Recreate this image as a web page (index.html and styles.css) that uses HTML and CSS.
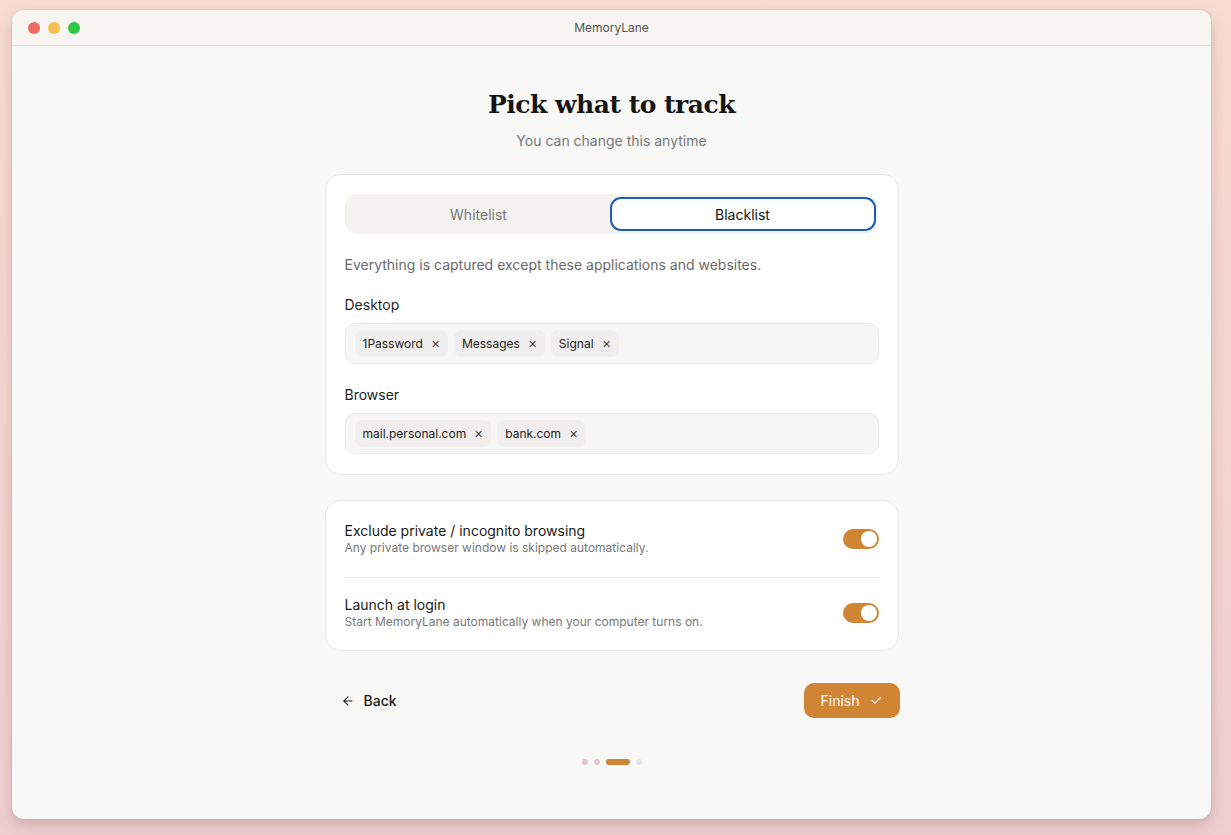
FILE: index.html
```html
<!DOCTYPE html>
<html lang="en">
<head>
  <meta charset="UTF-8" />
  <title>MemoryLane – Pick what to track</title>
  <link rel="stylesheet" href="styles.css">
</head>
<body>
<div class="window">
  <!-- ===== Title bar ===== -->
  <div class="titlebar">
    <div class="lights">
      <span class="light red"></span>
      <span class="light yellow"></span>
      <span class="light green"></span>
    </div>
    <div class="app-title">MemoryLane</div>
  </div>

  <!-- ===== Content ===== -->
  <main class="content">
    <h1>Pick what to track</h1>
    <p class="subtitle">You can change this anytime</p>

    <section class="card">
      <div class="segment">
        <button class="seg-btn">Whitelist</button>
        <button class="seg-btn active">Blacklist</button>
      </div>
      <p class="hint">Everything is captured except these applications and websites.</p>

      <div class="field-label">Desktop</div>
      <div class="tag-input">
        <span class="chip">1Password <span class="x">✕</span></span>
        <span class="chip">Messages <span class="x">✕</span></span>
        <span class="chip">Signal <span class="x">✕</span></span>
      </div>

      <div class="field-label">Browser</div>
      <div class="tag-input">
        <span class="chip">mail.personal.com <span class="x">✕</span></span>
        <span class="chip">bank.com <span class="x">✕</span></span>
      </div>
    </section>

    <section class="card settings">
      <div class="setting-row">
        <div class="setting-text">
          <div class="setting-title">Exclude private / incognito browsing</div>
          <div class="setting-sub">Any private browser window is skipped automatically.</div>
        </div>
        <span class="toggle on"></span>
      </div>
      <div class="setting-row">
        <div class="setting-text">
          <div class="setting-title">Launch at login</div>
          <div class="setting-sub">Start MemoryLane automatically when your computer turns on.</div>
        </div>
        <span class="toggle on"></span>
      </div>
    </section>

    <div class="footer-nav">
      <button class="btn-back">
        <svg width="14" height="14" viewBox="0 0 24 24" fill="none" stroke="currentColor" stroke-width="2" stroke-linecap="round" stroke-linejoin="round"><path d="M19 12H5"/><path d="M12 19l-7-7 7-7"/></svg>
        Back
      </button>
      <button class="btn-finish">
        Finish
        <svg width="13" height="13" viewBox="0 0 24 24" fill="none" stroke="currentColor" stroke-width="2" stroke-linecap="round" stroke-linejoin="round"><path d="M20 6L9 17l-5-5"/></svg>
      </button>
    </div>

    <div class="steps">
      <span class="dot done"></span>
      <span class="dot done"></span>
      <span class="dot current"></span>
      <span class="dot"></span>
    </div>
  </main>
</div>
</body>
</html>
```

FILE: styles.css
```css
:root {
  --accent: #cf8534;
  --text: #1c1c1c;
  --muted: #777777;
  --line: #e8e7e4;
  --win-bg: #f8f8f7;
  --focus: #1a5fb4;
}

/* ===== Reset ===== */
*, *::before, *::after { box-sizing: border-box; }
html, body { height: 100%; }
body {
  margin: 0;
  padding: 10px 20px 16px 12px;
  font-family: Inter, "Noto Sans", Arial, sans-serif;
  color: var(--text);
  background: linear-gradient(180deg, #f8dccf 0%, #f3d5d1 50%, #eecfd0 100%);
}
button {
  font-family: inherit;
  cursor: pointer;
  border: none;
  background: none;
}

/* ===== Window ===== */
.window {
  width: 1199px;
  height: 809px;
  background: var(--win-bg);
  border-radius: 12px;
  overflow: hidden;
  box-shadow: 0 6px 14px rgba(110, 70, 80, .25), 0 0 0 1px rgba(0,0,0,.04);
  display: flex;
  flex-direction: column;
}
.titlebar {
  height: 36px;
  flex: none;
  background: #f6f5f1;
  border-bottom: 1px solid #e4e2de;
  display: flex;
  align-items: center;
  position: relative;
}
.lights { display: flex; gap: 8px; padding-left: 16px; }
.light { width: 12px; height: 12px; border-radius: 50%; }
.light.red { background: #ee6b60; }
.light.yellow { background: #f6be4f; }
.light.green { background: #2ec840; }
.app-title {
  position: absolute;
  left: 0; right: 0;
  text-align: center;
  font-size: 12px;
  color: #555;
  pointer-events: none;
}

/* ===== Content ===== */
.content {
  display: flex;
  flex-direction: column;
  align-items: center;
  padding-top: 41px;
}
h1 {
  margin: 0;
  font-family: "DejaVu Serif", "Liberation Serif", serif;
  font-weight: bold;
  font-size: 25px;
  line-height: 36px;
  letter-spacing: -0.5px;
  color: #151515;
}
.subtitle {
  margin: 8px 0 0;
  font-size: 14px;
  line-height: 20px;
  color: var(--muted);
}

.card {
  width: 574px;
  background: #fff;
  border: 1px solid var(--line);
  border-radius: 16px;
  padding: 19px 19px 20px;
  margin-top: 23px;
}

/* Segmented control */
.segment {
  display: flex;
  background: #f5f3ef;
  border-radius: 12px;
  padding: 3px 1px 3px 3px;
  height: 40px;
  margin-right: 2px;
}
.seg-btn {
  flex: 1;
  font-size: 14px;
  color: #777;
  border-radius: 11px;
}
.seg-btn.active {
  background: #fff;
  color: #111;
  border: 2px solid var(--focus);
}
.hint {
  margin: 21px 0 0;
  font-size: 14px;
  line-height: 20px;
  color: #6a6a6a;
}
.field-label {
  margin-top: 20px;
  font-size: 14px;
  line-height: 20px;
  color: #1f1f1f;
}
.tag-input + .field-label { margin-top: 21px; }
.tag-input {
  margin-top: 8px;
  height: 41px;
  background: #f6f6f5;
  border: 1px solid #ebebea;
  border-radius: 10px;
  display: flex;
  align-items: center;
  gap: 6px;
  padding: 0 9px;
}
.chip {
  display: inline-flex;
  align-items: center;
  gap: 8px;
  height: 27px;
  padding: 0 8px;
  background: #f0efed;
  border-radius: 8px;
  font-size: 12px;
  color: #222;
}
.chip .x { font-size: 11px; color: #444; }

/* Settings card */
.settings { padding: 21px 19px 20px; margin-top: 25px; }
.setting-row {
  display: flex;
  align-items: center;
  justify-content: space-between;
}
.setting-row:first-child { padding-bottom: 21px; }
.setting-row + .setting-row {
  border-top: 1px solid #e9e9e7;
  padding-top: 18px;
}
.setting-title { font-size: 14px; line-height: 18px; color: #1a1a1a; }
.setting-sub { font-size: 12px; line-height: 16px; color: var(--muted); }
.toggle {
  width: 36px;
  height: 20px;
  border-radius: 10px;
  background: #d4d4d4;
  position: relative;
  flex: none;
}
.toggle.on { background: var(--accent); }
.toggle::after {
  content: "";
  position: absolute;
  top: 2px;
  left: 2px;
  width: 16px;
  height: 16px;
  border-radius: 50%;
  background: #fff;
}
.toggle.on::after { left: 18px; }

/* Footer */
.footer-nav {
  width: 574px;
  margin-top: 32px;
  display: flex;
  justify-content: space-between;
  align-items: center;
}
.btn-back {
  display: flex;
  align-items: center;
  gap: 9px;
  font-size: 14px;
  font-weight: 500;
  color: #1a1a1a;
  padding: 8px 16px;
}
.btn-finish {
  display: flex;
  align-items: center;
  gap: 10px;
  height: 35px;
  padding: 0 17px;
  border-radius: 10px;
  background: var(--accent);
  color: #fff;
  font-size: 14px;
  margin-right: -1px;
}
.steps {
  margin-top: 41px;
  display: flex;
  gap: 6px;
  align-items: center;
}
.dot { width: 6px; height: 6px; border-radius: 3px; background: #e6e6e6; }
.dot.done { background: #e5c7c7; }
.dot.current { width: 24px; background: var(--accent); }
```
